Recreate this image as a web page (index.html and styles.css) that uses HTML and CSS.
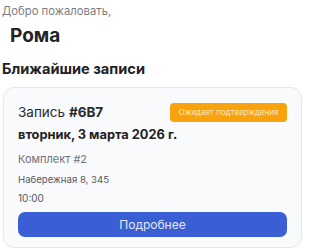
FILE: index.html
```html
<!DOCTYPE html>
<html lang="ru">
<head>
<meta charset="utf-8">
<link rel="stylesheet" href="styles.css">
</head>
<body>
<div class="page">
  <div class="welcome">Добро пожаловать,</div>
  <div class="name">Рома</div>
  <h2 class="section">Ближайшие записи</h2>
  <div class="card">
    <div class="card-head">
      <div class="rec">Запись <b>#6B7</b></div>
      <span class="badge">Ожидает подтверждения</span>
    </div>
    <div class="date">вторник, 3 марта 2026 г.</div>
    <div class="kit">Комплект #2</div>
    <div class="addr">Набережная 8, 345</div>
    <div class="time">10:00</div>
    <button class="btn">Подробнее</button>
  </div>
</div>
</body>
</html>
```
FILE: styles.css
```css
* { box-sizing: border-box; }
html, body { margin: 0; padding: 0; background: #fff; }
body { font-family: Inter, "Noto Sans", sans-serif; color: #1f2126; }
.page { padding: 4px 10px 0 2px; }
.welcome { font-size: 11.3px; color: #7a7d84; line-height: 15px; }
.name { font-size: 19px; font-weight: 700; line-height: 24px; margin: 5px 0 0 8px; color: #202226; }
.section { font-size: 14.6px; font-weight: 700; line-height: 20px; margin: 11px 0 0 0; color: #202226; }
.card {
  margin: 8px 0 0 1px;
  width: 299px;
  border: 1px solid #e6e8ec;
  border-radius: 11px;
  background: #f9fafc;
  padding: 14px 14px 10px 14px;
  display: flex;
  flex-direction: column;
}
.card-head { display: flex; justify-content: space-between; align-items: center; height: 20px; }
.rec { font-size: 13.5px; color: #2a2c31; }
.rec b { font-weight: 700; }
.badge {
  background: #f8a20e;
  color: #fde6bd;
  font-size: 8px;
  border-radius: 4px;
  padding: 0 7px;
  height: 19px;
  line-height: 19px;
  width: 117px;
  text-align: center;
}
.date { font-size: 12.8px; font-weight: 700; margin-top: 4px; line-height: 18px; color: #1f2126; }
.kit { font-size: 11px; color: #6e7178; margin-top: 8px; line-height: 14px; }
.addr { font-size: 9.6px; color: #55585f; margin-top: 7px; line-height: 13px; }
.time { font-size: 10px; color: #55585f; margin-top: 6px; line-height: 13px; }
.btn {
  margin-top: 7px;
  height: 25px;
  border: none;
  border-radius: 7px;
  background: #3a5ed3;
  color: #e3e8f7;
  font-family: inherit;
  font-size: 12px;
  width: 100%;
}
```
